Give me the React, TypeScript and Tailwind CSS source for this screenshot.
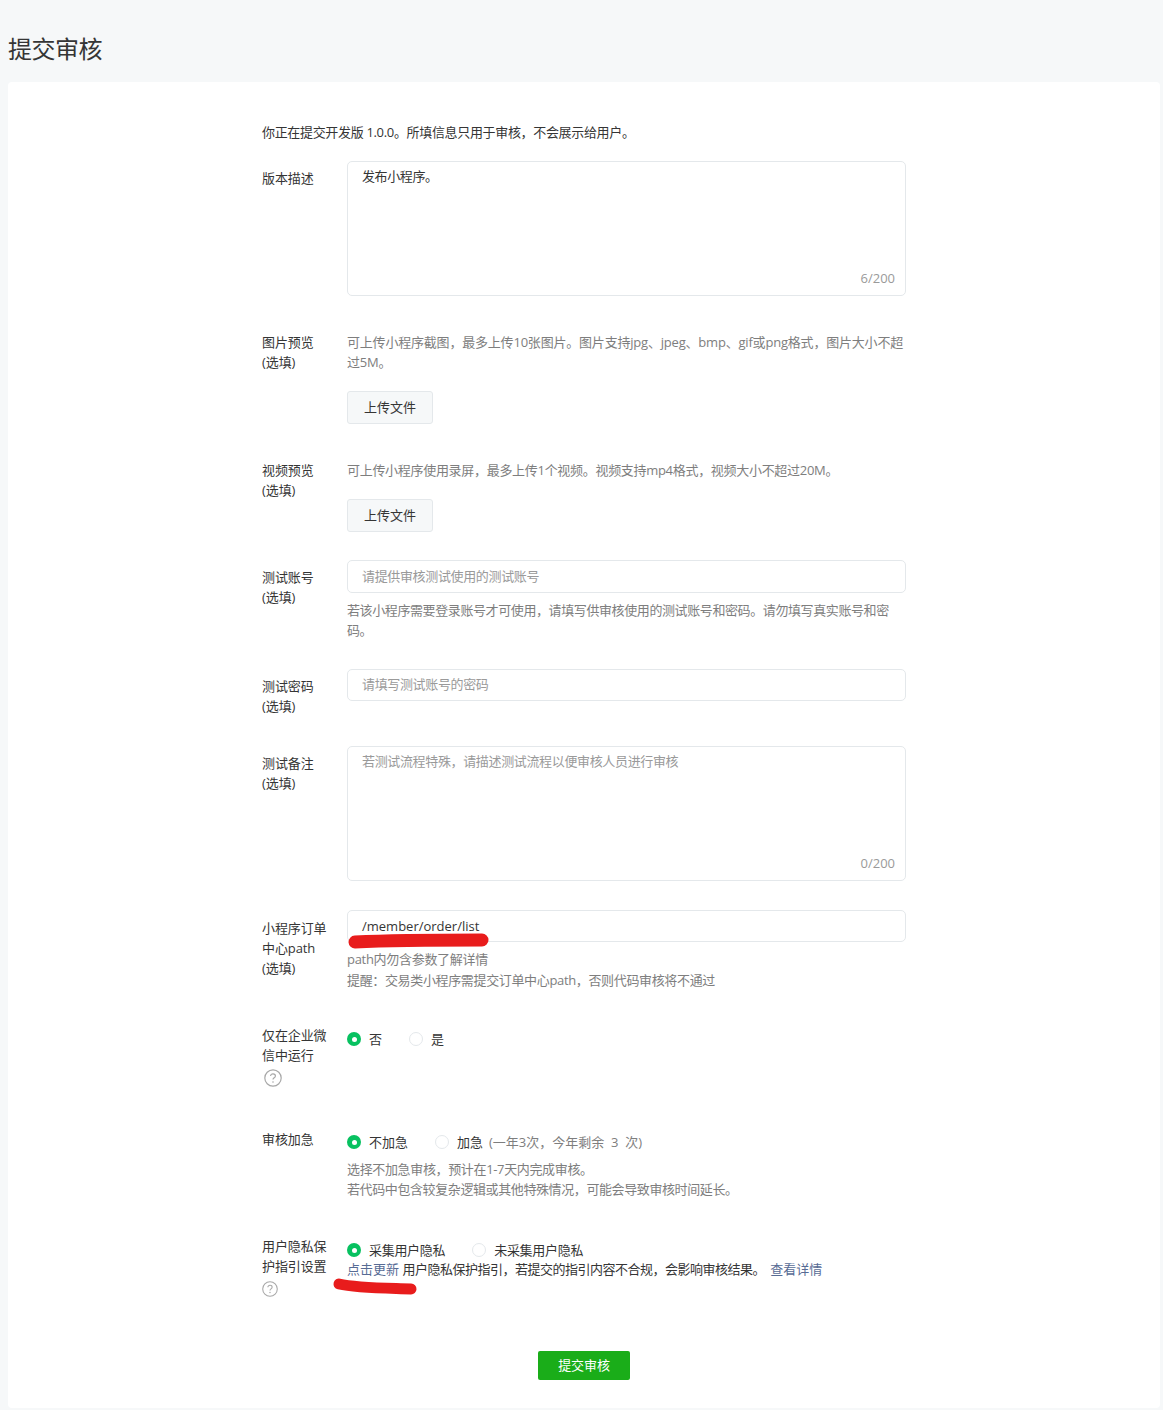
const font = { fontFamily: '"Open Sans","Noto Sans CJK SC",sans-serif' };

function Label({ lines, className = "" }: { lines: string[]; className?: string }) {
  return (
    <div className={"w-[85px] shrink-0 text-[13px] leading-[20px] tracking-[-0.1px] text-[#353535] " + className}>
      {lines.map((l) => (
        <div key={l}>{l}</div>
      ))}
    </div>
  );
}

function Help({ size = 18, className = "" }: { size?: number; className?: string }) {
  return (
    <svg width={size} height={size} viewBox="0 0 18 18" fill="none" className={className}>
      <circle cx="9" cy="9" r="8.2" stroke="#a8a8a8" strokeWidth="1.2" />
      <path d="M6.6 7.1c0-1.4 1.1-2.3 2.4-2.3s2.4.9 2.4 2.1c0 1.9-2.4 1.9-2.4 3.7" stroke="#a8a8a8" strokeWidth="1.2" />
      <circle cx="9" cy="13" r=".8" fill="#a8a8a8" />
    </svg>
  );
}

function Radio({ on, label, gap = "mr-[27px]", text = "" }: { on?: boolean; label: string; gap?: string; text?: string }) {
  return (
    <span className={"flex items-center " + gap}>
      {on ? (
        <span className="flex h-[14px] w-[14px] items-center justify-center rounded-full bg-[#07c160]">
          <span className="h-[5px] w-[5px] rounded-full bg-white" />
        </span>
      ) : (
        <span className="h-[14px] w-[14px] rounded-full border border-[#e4e8eb] bg-white" />
      )}
      <span className={"ml-[8px] text-[13px] leading-[20px] text-[#353535] " + text}>{label}</span>
    </span>
  );
}

function UploadButton() {
  return (
    <button className="flex h-[33px] w-[86px] items-center justify-center rounded-[3px] border border-[#e4e8eb] bg-[#f6f8f9] text-[13px] text-[#353535]">
      上传文件
    </button>
  );
}

function TextBox({ text, placeholder, count }: { text?: string; placeholder?: string; count: string }) {
  return (
    <div className="flex h-[135px] w-[559px] flex-col justify-between rounded-[5px] border border-[#e4e8eb] bg-white pt-[4px] pr-[10px] pb-[7px] pl-[14px] text-[13px] leading-[20px]">
      <div className={text ? "tracking-[-0.4px] text-[#353535]" : "tracking-[-0.35px] text-[#9a9a9a]"}>{text || placeholder}</div>
      <div className="text-right text-[#9a9a9a]">{count}</div>
    </div>
  );
}

function Input({ text, placeholder, h = "h-[33px]" }: { text?: string; placeholder?: string; h?: string }) {
  return (
    <div className={"flex w-[559px] items-center rounded-[5px] border border-[#e4e8eb] bg-white pl-[14px] text-[13px] " + h + " " + (text ? "pt-[1px] text-[#353535]" : "tracking-[-0.35px] text-[#9a9a9a]")}>
      {text || placeholder}
    </div>
  );
}

const desc = "text-[13px] leading-[20px] text-[#7e7e7e]";

export default function App() {
  return (
    <div className="min-h-[1410px] bg-[#f6f8f9] px-[8px]" style={font}>
      <h1 className="pt-[32px] pb-[17px] text-[24px] leading-[33px] font-normal tracking-[-0.5px] text-[#353535]">提交审核</h1>
      <div className="relative h-[1326px] w-[1152px] rounded-[4px] bg-white pt-[40px] pl-[254px]">
        <div className="text-[13px] leading-[20px] tracking-[-0.33px] text-[#353535]">你正在提交开发版 1.0.0。所填信息只用于审核，不会展示给用户。</div>

        <div className="mt-[19px] flex">
          <Label lines={["版本描述"]} className="pt-[7px]" />
          <TextBox text="发布小程序。" count="6/200" />
        </div>

        <div className="mt-[36px] flex">
          <Label lines={["图片预览", "(选填)"]} />
          <div className="w-[559px]">
            <div className={desc + " tracking-[-0.2px]"}>可上传小程序截图，最多上传10张图片。图片支持jpg、jpeg、bmp、gif或png格式，图片大小不超过5M。</div>
            <div className="mt-[19px]"><UploadButton /></div>
          </div>
        </div>

        <div className="mt-[36px] flex">
          <Label lines={["视频预览", "(选填)"]} />
          <div className="w-[559px]">
            <div className={desc + " tracking-[-0.3px]"}>可上传小程序使用录屏，最多上传1个视频。视频支持mp4格式，视频大小不超过20M。</div>
            <div className="mt-[19px]"><UploadButton /></div>
          </div>
        </div>

        <div className="mt-[28px] flex">
          <Label lines={["测试账号", "(选填)"]} className="pt-[7px]" />
          <div className="w-[559px]">
            <Input placeholder="请提供审核测试使用的测试账号" />
            <div className={desc + " mt-[7px] tracking-[-0.4px]"}>若该小程序需要登录账号才可使用，请填写供审核使用的测试账号和密码。请勿填写真实账号和密码。</div>
          </div>
        </div>

        <div className="mt-[29px] flex">
          <Label lines={["测试密码", "(选填)"]} className="pt-[7px]" />
          <Input placeholder="请填写测试账号的密码" h="h-[32px]" />
        </div>

        <div className="mt-[30px] flex">
          <Label lines={["测试备注", "(选填)"]} className="pt-[7px]" />
          <TextBox placeholder="若测试流程特殊，请描述测试流程以便审核人员进行审核" count="0/200" />
        </div>

        <div className="mt-[29px] flex">
          <Label lines={["小程序订单", "中心path", "(选填)"]} className="pt-[8px]" />
          <div className="w-[559px]">
            <Input text="/member/order/list" h="h-[32px]" />
            <div className={desc + " mt-[7px] tracking-[-0.3px]"}>path内勿含参数了解详情</div>
            <div className={desc + " mt-[1px] tracking-[-0.35px]"}>提醒：交易类小程序需提交订单中心path，否则代码审核将不通过</div>
          </div>
        </div>

        <div className="mt-[35px] flex">
          <div className="w-[85px] shrink-0">
            <Label lines={["仅在企业微", "信中运行"]} />
            <Help className="mt-[4px] ml-[2px]" />
          </div>
          <div className="flex items-start pt-[4px]">
            <Radio on label="否" />
            <Radio label="是" />
          </div>
        </div>

        <div className="mt-[42px] flex">
          <Label lines={["审核加急"]} />
          <div>
            <div className="flex items-center pt-[3px]">
              <Radio on label="不加急" />
              <Radio label="加急" gap="" />
              <span className="ml-[6px] text-[13px] leading-[20px] text-[#7e7e7e]">(一年3次，今年剩余&nbsp; 3&nbsp; 次)</span>
            </div>
            <div className={desc + " mt-[7px] tracking-[-0.35px]"}>选择不加急审核，预计在1-7天内完成审核。</div>
            <div className={desc + " tracking-[-0.4px]"}>若代码中包含较复杂逻辑或其他特殊情况，可能会导致审核时间延长。</div>
          </div>
        </div>

        <div className="mt-[37px] flex">
          <div className="w-[85px] shrink-0">
            <Label lines={["用户隐私保", "护指引设置"]} />
            <Help size={16} className="mt-[5px]" />
          </div>
          <div>
            <div className="flex pt-[4px]">
              <Radio on label="采集用户隐私" text="tracking-[-0.3px]" />
              <Radio label="未采集用户隐私" text="tracking-[-0.3px]" />
            </div>
            <div className="-mt-[1px] text-[13px] leading-[20px] text-[#353535]">
              <span className="text-[#576b95]">点击更新</span> <span className="tracking-[-0.5px]">用户隐私保护指引，若提交的指引内容不合规，会影响审核结果。</span> <span className="ml-[2px] text-[#576b95]">查看详情</span>
            </div>
          </div>
        </div>

        <button className="absolute top-[1269px] left-[530px] flex h-[29px] w-[92px] items-center justify-center rounded-[2px] bg-[#1aad19] text-[13px] tracking-[-0.1px] text-white">提交审核</button>

        <svg className="absolute top-[845px] left-[338px]" width="145" height="22" viewBox="0 0 145 22" fill="none">
          <path d="M9 15C30 14 70 13 136 13" stroke="#e81c1c" strokeWidth="13" strokeLinecap="round" />
        </svg>
        <svg className="absolute top-[1194px] left-[323px]" width="90" height="24" viewBox="0 0 90 24" fill="none">
          <path d="M8 8C25 12 50 12 80 13" stroke="#e81c1c" strokeWidth="11" strokeLinecap="round" />
        </svg>
      </div>
    </div>
  );
}
